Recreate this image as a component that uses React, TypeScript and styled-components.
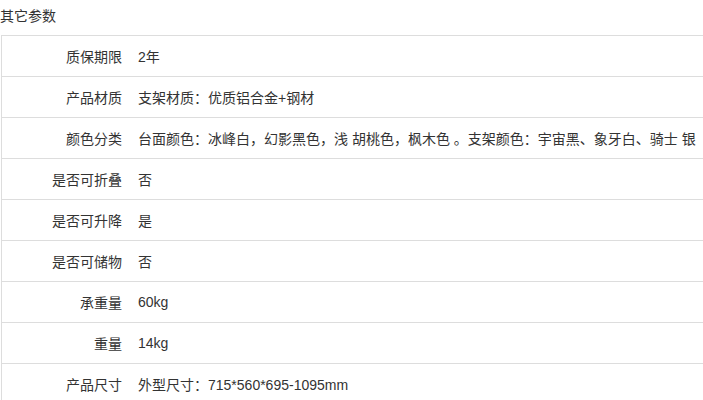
import React from "react"
import styled, { createGlobalStyle } from "styled-components"

interface Param {
  label: string
  value: string
}

const params: Param[] = [
  { label: "质保期限", value: "2年" },
  { label: "产品材质", value: "支架材质：优质铝合金+钢材" },
  {
    label: "颜色分类",
    value:
      "台面颜色：冰峰白，幻影黑色，浅 胡桃色，枫木色 。支架颜色：宇宙黑、象牙白、骑士 银",
  },
  { label: "是否可折叠", value: "否" },
  { label: "是否可升降", value: "是" },
  { label: "是否可储物", value: "否" },
  { label: "承重量", value: "60kg" },
  { label: "重量", value: "14kg" },
  { label: "产品尺寸", value: "外型尺寸：715*560*695-1095mm" },
]

const GlobalStyle = createGlobalStyle`
  html, body {
    margin: 0;
    padding: 0;
    background: #fff;
    overflow: hidden;
  }
  body {
    font-family: "Liberation Sans", "Noto Sans CJK SC", sans-serif;
    font-size: 14px;
    color: #333;
  }
`

const App = () => {
  return (
    <Page>
      <GlobalStyle />
      <Title>其它参数</Title>
      <Table>
        {params.map((p, key) => (
          <Row key={key}>
            <Label>{p.label}</Label>
            <Value>{p.value}</Value>
          </Row>
        ))}
      </Table>
    </Page>
  )
}

const Page = styled.div`
  width: 703px;
  height: 400px;
  overflow: hidden;
`

const Title = styled.div`
  height: 35px;
  line-height: 32px;
  padding-left: 0;
  color: #333;
`

const Table = styled.div`
  margin-left: 1px;
  width: 740px;
  border-left: 1px solid #ddd;
`

const Row = styled.div`
  display: flex;
  align-items: center;
  height: 40px;
  border-top: 1px solid #ddd;
  white-space: nowrap;
`

const Label = styled.div`
  width: 120px;
  flex-shrink: 0;
  text-align: right;
`

const Value = styled.div`
  padding-left: 16px;
`

export default App
